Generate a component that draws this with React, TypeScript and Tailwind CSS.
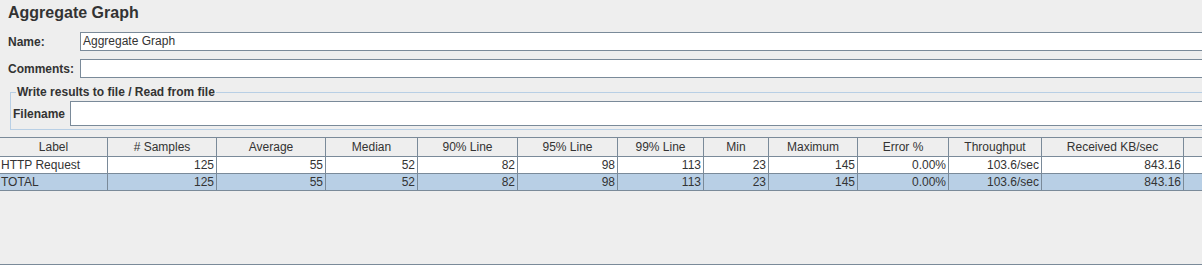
import React from 'react'

const cols = ['Label', '# Samples', 'Average', 'Median', '90% Line', '95% Line', '99% Line', 'Min', 'Maximum', 'Error %', 'Throughput', 'Received KB/sec', '']

const rows = [
  { selected: false, cells: ['HTTP Request', '125', '55', '52', '82', '98', '113', '23', '145', '0.00%', '103.6/sec', '843.16', ''] },
  { selected: true, cells: ['TOTAL', '125', '55', '52', '82', '98', '113', '23', '145', '0.00%', '103.6/sec', '843.16', ''] },
]

const gridCols =
  'grid grid-cols-[108px_109px_109px_92px_100px_100px_86px_65px_89px_91px_93px_142px_1fr]'

const last = cols.length - 1

export default function App() {
  return (
    <div
      className="w-[1202px] h-[265px] bg-[#eeeeee] overflow-hidden flex flex-col text-[12px] text-[#333333]"
      style={{ fontFamily: '"Liberation Sans", Arial, sans-serif' }}
    >
      {/* Title */}
      <div className="h-[32px] pl-[8px] pt-[4px]">
        <h1 className="text-[16px] leading-[18px] font-bold">Aggregate Graph</h1>
      </div>

      {/* Name / Comments */}
      <div className="w-[1230px] flex flex-col gap-[8px]">
        <div className="flex items-center h-[19px]">
          <label className="w-[80px] pl-[8px] font-bold">Name:</label>
          <div className="flex-1 h-[19px] bg-white border border-[#7a8a99] pl-[2px] leading-[17px]">
            Aggregate Graph
          </div>
        </div>
        <div className="flex items-center h-[19px]">
          <label className="w-[80px] pl-[8px] font-bold">Comments:</label>
          <div className="flex-1 h-[19px] bg-white border border-[#7a8a99]" />
        </div>
      </div>

      {/* Write results to file */}
      <fieldset className="w-[1230px] ml-[10px] mt-[7px] border border-[#b8cfe5] pl-[2px] pb-[3px]">
        <legend className="ml-[3px] px-[1px] font-bold leading-[14px]">Write results to file / Read from file</legend>
        <div className="flex items-center mt-[2px]">
          <label className="w-[57px] font-bold">Filename</label>
          <div className="flex-1 h-[25px] bg-white border border-[#7a8a99]" />
        </div>
      </fieldset>

      {/* Table */}
      <div className="flex-1 mt-[7px] border-b border-[#7a8a99]">
        <div className={`${gridCols} h-[20px] border-t border-b border-[#7a8a99] bg-[#eeeeee]`}>
          {cols.map((c, i) => (
            <div
              key={i}
              className={`text-center leading-[18px] ${i === last ? '' : 'border-r border-[#7a8a99]'}`}
            >
              {c}
            </div>
          ))}
        </div>
        {rows.map((r, ri) => (
          <div
            key={ri}
            className={`${gridCols} h-[17px] border-b border-[#7a8a99] ${r.selected ? 'bg-[#b8cfe5]' : 'bg-white'}`}
          >
            {r.cells.map((c, i) => (
              <div
                key={i}
                className={`leading-[16px] whitespace-nowrap overflow-hidden ${i === last ? '' : 'border-r border-[#7a8a99]'} ${i === 0 ? 'pl-[1px] text-left' : 'pr-[2px] text-right'}`}
              >
                {c}
              </div>
            ))}
          </div>
        ))}
      </div>
    </div>
  )
}
